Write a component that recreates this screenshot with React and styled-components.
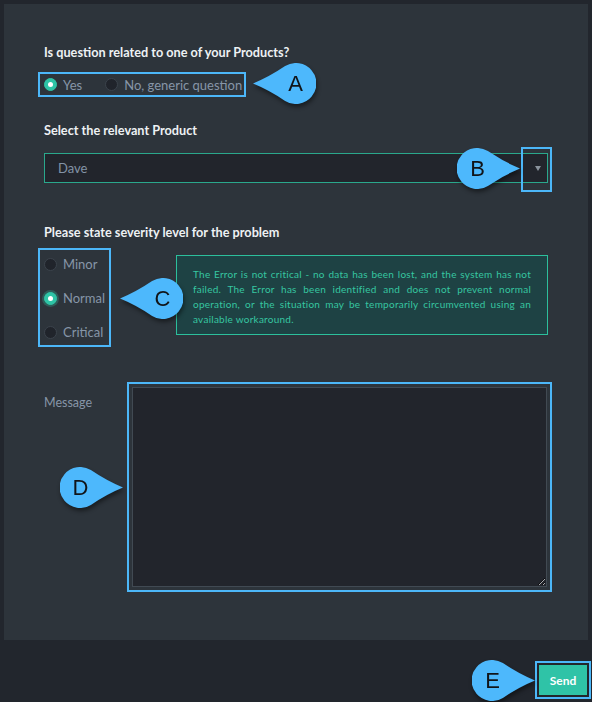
import React from 'react'
import styled, { createGlobalStyle } from 'styled-components'

const GlobalStyle = createGlobalStyle`
  html, body {
    margin: 0;
    padding: 0;
    background: #22262d;
  }
  * { box-sizing: border-box; }
`;

const Page = styled.div`
  position: relative;
  width: 592px;
  height: 702px;
  padding: 4px 0 0 4px;
  font-family: Lato, "Open Sans", sans-serif;
`;

const Panel = styled.form`
  width: 584px;
  height: 636px;
  background: #2d343b;
  padding: 40px 40px 0 40px;
  display: flex;
  flex-direction: column;
`;

const Heading = styled.div`
  color: #eef1f4;
  font-size: 12.7px;
  font-weight: 700;
  line-height: 16px;
  margin-top: ${({ mt }) => mt || 0}px;
`;

const Frame = styled.div`
  border: 2px solid #4cb7f9;
`;

const InlineGroup = styled(Frame)`
  display: inline-flex;
  align-self: flex-start;
  align-items: center;
  gap: 23px;
  height: 25px;
  margin: 12px 0 0 -6px;
  padding: 0 2px 0 4px;
`;

const StackGroup = styled(Frame)`
  display: flex;
  flex-direction: column;
  gap: 10px;
  width: 73px;
  padding: 2px 0 1px 4px;
`;

const Option = styled.label`
  display: flex;
  align-items: center;
  gap: 6px;
  height: 24px;
  color: #8796a8;
  font-size: 13px;
`;

const Dot = styled.span`
  width: 13px;
  height: 13px;
  border-radius: 50%;
  flex: none;
  background: ${({ checked }) => (checked ? '#2ec4a6' : '#20242b')};
  border: 1px solid ${({ checked }) => (checked ? '#2ec4a6' : '#3b434c')};
  box-shadow: ${({ halo }) => (halo ? '0 0 0 2px rgba(46,196,166,0.28)' : 'none')};
  display: flex;
  align-items: center;
  justify-content: center;
  &::after {
    content: '';
    width: 5px;
    height: 5px;
    border-radius: 50%;
    background: #ffffff;
    display: ${({ checked }) => (checked ? 'block' : 'none')};
  }
`;

const SelectBox = styled.div`
  position: relative;
  height: 30px;
  margin-top: 15px;
  background: #22252c;
  border: 1px solid #2aa88c;
  display: flex;
  align-items: center;
  padding: 0 13px;
  color: #8393a6;
  font-size: 13px;
`;

const Arrow = styled.span`
  margin-left: auto;
  margin-right: -7px;
  width: 0;
  height: 0;
  border-left: 3.5px solid transparent;
  border-right: 3.5px solid transparent;
  border-top: 5px solid #8a939c;
`;

const ArrowFrame = styled(Frame)`
  position: absolute;
  left: 476px;
  top: -7px;
  width: 31px;
  height: 45px;
`;

const SeverityRow = styled.div`
  display: flex;
  align-items: flex-start;
  margin-top: 8px;
  margin-left: -6px;
`;

const Info = styled.div`
  flex: 1;
  margin: 7px 0 0 65px;
  height: 80px;
  background: #1e4244;
  border: 1px solid #2cbf9c;
  padding: 11px 16px 0 16px;
  color: #36c6a1;
  font-size: 10px;
  line-height: 15px;
  letter-spacing: 0.25px;
  text-align: justify;
`;

const MessageRow = styled.div`
  display: flex;
  margin-top: 35px;
  margin-right: -4px;
`;

const MessageLabel = styled.div`
  width: 83px;
  padding-top: 13px;
  color: #8796a8;
  font-size: 12.5px;
  line-height: 16px;
`;

const TextFrame = styled(Frame)`
  flex: 1;
  padding: 3px;
  height: 210px;
`;

const TextArea = styled.textarea`
  display: block;
  width: 100%;
  height: 200px;
  background: #22252c;
  border: 1px solid #414a53;
  resize: both;
  outline: none;
  color: #c9d1da;
`;

const Footer = styled.div`
  display: flex;
  justify-content: flex-end;
  padding: 21px 1px 0 0;
`;

const SendFrame = styled(Frame)`
  padding: 2px;
`;

const SendButton = styled.button`
  width: 48px;
  height: 30px;
  border: none;
  background: #2fc3a7;
  color: #ffffff;
  font-family: Lato, "Open Sans", sans-serif;
  font-weight: 700;
  font-size: 12px;
  padding: 0;
`;

const Callout = styled.div`
  position: absolute;
  left: ${({ x }) => x}px;
  top: ${({ y }) => y}px;
  width: 63px;
  height: 41px;
  filter: drop-shadow(1px 3px 2px rgba(0, 0, 0, 0.45));
  svg {
    display: block;
    transform: ${({ dir }) => (dir === 'right' ? 'scaleX(-1)' : 'none')};
  }
`;

const CalloutLetter = styled.span`
  position: absolute;
  top: 0;
  left: ${({ dir }) => (dir === 'right' ? 0 : 22)}px;
  width: 41px;
  height: 41px;
  display: flex;
  align-items: center;
  justify-content: center;
  font-family: "Liberation Sans", Arial, sans-serif;
  font-size: 22px;
  color: #111418;
`;

const Marker = ({ letter, x, y, dir }) => (
  <Callout x={x} y={y} dir={dir}>
    <svg width="63" height="41" viewBox="0 0 63 41">
      <path
        d="M0 20.5 Q16 14 32.1 3.1 A20.5 20.5 0 1 1 32.1 37.9 Q16 27 0 20.5 Z"
        fill="#4db8fc"
      />
    </svg>
    <CalloutLetter dir={dir}>{letter}</CalloutLetter>
  </Callout>
);

const severities = [
  { name: 'Minor', checked: false },
  { name: 'Normal', checked: true },
  { name: 'Critical', checked: false },
];

export default function App() {
  return (
    <>
      <GlobalStyle />
      <Page>
        <Panel>
          <Heading>Is question related to one of your Products?</Heading>
          <InlineGroup>
            <Option><Dot checked />Yes</Option>
            <Option><Dot />No, generic question</Option>
          </InlineGroup>

          <Heading mt={25}>Select the relevant Product</Heading>
          <SelectBox>
            Dave
            <Arrow />
            <ArrowFrame />
          </SelectBox>

          <Heading mt={41}>Please state severity level for the problem</Heading>
          <SeverityRow>
            <StackGroup>
              {severities.map((s) => (
                <Option key={s.name}>
                  <Dot checked={s.checked} halo={s.checked} />
                  {s.name}
                </Option>
              ))}
            </StackGroup>
            <Info>
              The Error is not critical - no data has been lost, and the system has not
              failed. The Error has been identified and does not prevent normal
              operation, or the situation may be temporarily circumvented using an
              available workaround.
            </Info>
          </SeverityRow>

          <MessageRow>
            <MessageLabel>Message</MessageLabel>
            <TextFrame>
              <TextArea />
            </TextFrame>
          </MessageRow>
        </Panel>
        <Footer>
          <SendFrame>
            <SendButton type="button">Send</SendButton>
          </SendFrame>
        </Footer>

        <Marker letter="A" x={253} y={63} dir="left" />
        <Marker letter="B" x={457} y={148} dir="right" />
        <Marker letter="C" x={120} y={278} dir="left" />
        <Marker letter="D" x={60} y={467} dir="right" />
        <Marker letter="E" x={472} y={660} dir="right" />
      </Page>
    </>
  )
}
